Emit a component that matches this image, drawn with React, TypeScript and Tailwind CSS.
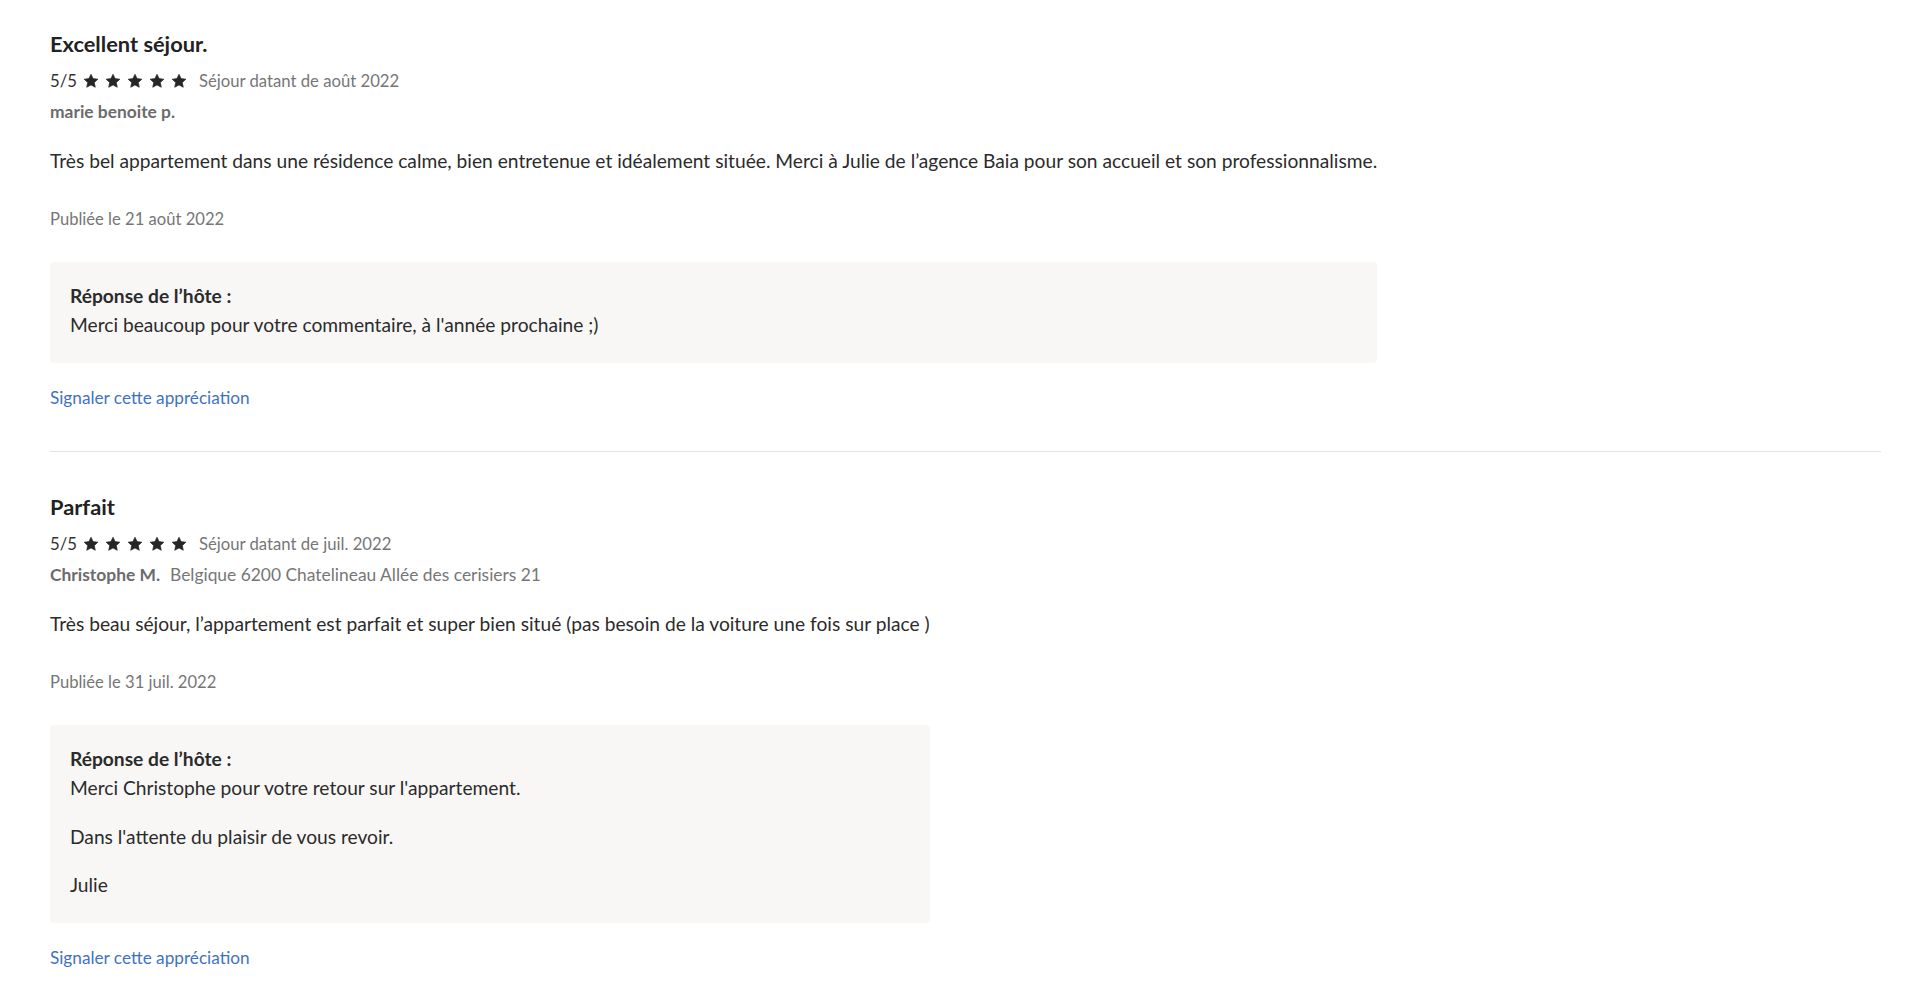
import React from "react";

function Star() {
  return (
    <svg viewBox="0 0 24 24" className="w-[16px] h-[16px]" fill="#262626">
      <path d="M12 1.8l3.1 6.6 7.2.9-5.3 5 1.4 7.1L12 17.9l-6.4 3.5 1.4-7.1-5.3-5 7.2-.9z" strokeLinejoin="round" stroke="#262626" strokeWidth="1" />
    </svg>
  );
}

function Stars() {
  return (
    <div className="flex items-center gap-[6px]">
      <Star />
      <Star />
      <Star />
      <Star />
      <Star />
    </div>
  );
}

type Review = {
  title: string;
  stay: string;
  author: string;
  location?: string;
  body: string;
  published: string;
  reply: string[];
};

const reviews: Review[] = [
  {
    title: "Excellent séjour.",
    stay: "Séjour datant de août 2022",
    author: "marie benoite p.",
    body: "Très bel appartement dans une résidence calme, bien entretenue et idéalement située. Merci à Julie de l’agence Baia pour son accueil et son professionnalisme.",
    published: "Publiée le 21 août 2022",
    reply: ["Merci beaucoup pour votre commentaire, à l'année prochaine ;)"],
  },
  {
    title: "Parfait",
    stay: "Séjour datant de juil. 2022",
    author: "Christophe M.",
    location: "Belgique 6200 Chatelineau Allée des cerisiers 21",
    body: "Très beau séjour, l’appartement est parfait et super bien situé (pas besoin de la voiture une fois sur place )",
    published: "Publiée le 31 juil. 2022",
    reply: [
      "Merci Christophe pour votre retour sur l'appartement.",
      "Dans l'attente du plaisir de vous revoir.",
      "Julie",
    ],
  },
];

function ReviewItem({ r }: { r: Review }) {
  return (
    <div className="w-fit">
      <h3 className="text-[21.8px] leading-[28px] font-bold text-[#222222]">{r.title}</h3>
      <div className="mt-[11px] flex items-center h-[24px] text-[16.7px] leading-[24px]">
        <span className="text-[#333333] mr-[6px]">5/5</span>
        <Stars />
        <span className="ml-[12px] text-[#767676]">{r.stay}</span>
      </div>
      <div className="mt-[7px] flex items-center text-[17.4px] leading-[24px]">
        <span className="font-bold text-[#6b6b6b]">{r.author}</span>
        {r.location && <span className="ml-[10px] text-[#767676]">{r.location}</span>}
      </div>
      <p className="mt-[23px] text-[19.2px] leading-[28px] text-[#2b2b2b]">{r.body}</p>
      <p className="mt-[32px] text-[16.6px] leading-[24px] text-[#767676]">{r.published}</p>
      <div className="mt-[31px] bg-[#f8f7f6] rounded-[4px] pl-[20px] pr-[20px] pt-[19px] pb-[24px] text-[19.2px] leading-[29px] text-[#2b2b2b]">
        <div className="font-bold">Réponse de l’hôte :</div>
        {r.reply.map((line, i) => (
          <p key={i} className={i > 0 ? "mt-[19.5px]" : ""}>
            {line}
          </p>
        ))}
      </div>
      <a href="#" className="mt-[23px] block w-fit text-[17.2px] leading-[24px] text-[#3f72c4]">
        Signaler cette appréciation
      </a>
    </div>
  );
}

export default function App() {
  return (
    <div
      className="bg-white min-h-screen pl-[50px] pr-[39px] pt-[30px]"
      style={{ fontFamily: "Lato, 'Noto Sans', sans-serif" }}
    >
      <ReviewItem r={reviews[0]} />
      <div className="mt-[41px] h-px bg-[#e2e2e2]" />
      <div className="pt-[41px]">
        <ReviewItem r={reviews[1]} />
      </div>
    </div>
  );
}
